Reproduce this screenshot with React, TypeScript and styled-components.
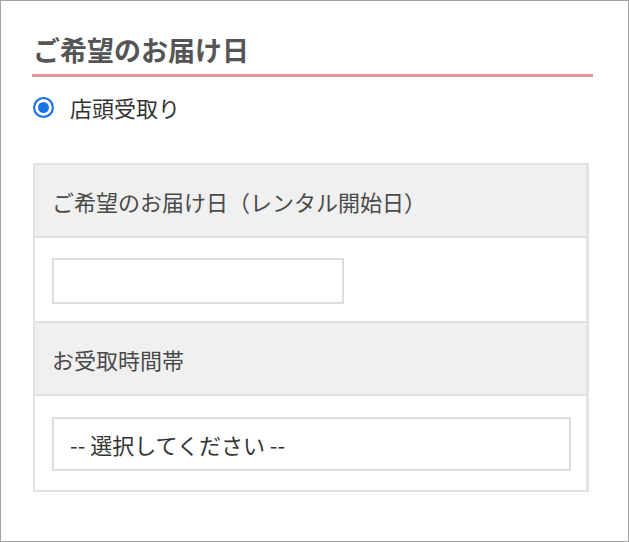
import styled, { createGlobalStyle } from 'styled-components'

const GlobalStyle = createGlobalStyle`
  html, body {
    margin: 0;
    padding: 0;
    background: #ffffff;
  }
  body {
    font-family: "Noto Sans CJK JP", "Noto Sans", sans-serif;
    color: #333333;
  }
`

const Frame = styled.div`
  box-sizing: border-box;
  width: 629px;
  height: 542px;
  border: 1px solid #a3a3a3;
  padding: 29px 35px 0 31px;
`

const Heading = styled.h2`
  margin: 0;
  padding: 0 0 5px 1px;
  font-size: 27px;
  font-weight: 700;
  line-height: 39px;
  color: #555555;
  border-bottom: 3px solid #ee9393;
`

const RadioRow = styled.label`
  display: flex;
  align-items: center;
  gap: 16px;
  margin: 15px 0 0 1px;
  font-size: 22px;
  line-height: 30px;
  color: #333333;
`

const RadioMark = styled.span<{ checked?: boolean }>`
  box-sizing: border-box;
  width: 21px;
  height: 21px;
  border-radius: 50%;
  border: 2px solid ${(p) => (p.checked ? '#1a73e8' : '#767676')};
  background: ${(p) => (p.checked ? '#1a73e8' : '#ffffff')};
  box-shadow: inset 0 0 0 3px #ffffff;
  flex-shrink: 0;
`

const Table = styled.div`
  margin: 41px 4px 0 1px;
  border: 2px solid #e3e3e3;
  border-right-width: 3px;
`

const HeadCell = styled.div`
  box-sizing: border-box;
  height: 73px;
  display: flex;
  align-items: center;
  padding: 0 17px;
  background: #f0f0f0;
  font-size: 22px;
  color: #4a4a4a;
  border-bottom: 2px solid #e0e0e0;
`

const BodyCell = styled.div<{ last?: boolean }>`
  box-sizing: border-box;
  height: ${(p) => (p.last ? '94px' : '85px')};
  padding: ${(p) => (p.last ? '21px 17px 0' : '20px 17px 0')};
  background: #ffffff;
  border-bottom: ${(p) => (p.last ? 'none' : '2px solid #e0e0e0')};
`

const TextInput = styled.input`
  box-sizing: border-box;
  display: block;
  width: 292px;
  height: 46px;
  margin: 0;
  border: 2px solid #dddddd;
  background: #ffffff;
  outline: none;
`

const Select = styled.select`
  box-sizing: border-box;
  display: block;
  width: 519px;
  height: 54px;
  margin: 0;
  padding: 0 16px;
  border: 2px solid #dddddd;
  border-radius: 0;
  background: #ffffff;
  appearance: none;
  font-family: "Noto Sans CJK JP", "Noto Sans", sans-serif;
  font-size: 22px;
  color: #333333;
`

export default function App() {
  return (
    <>
      <GlobalStyle />
      <Frame>
        <Heading>ご希望のお届け日</Heading>
        <RadioRow>
          <RadioMark checked />
          店頭受取り
        </RadioRow>
        <Table>
          <HeadCell>ご希望のお届け日（レンタル開始日）</HeadCell>
          <BodyCell>
            <TextInput type='text' />
          </BodyCell>
          <HeadCell>お受取時間帯</HeadCell>
          <BodyCell last>
            <Select defaultValue=''>
              <option value=''>-- 選択してください --</option>
            </Select>
          </BodyCell>
        </Table>
      </Frame>
    </>
  )
}
